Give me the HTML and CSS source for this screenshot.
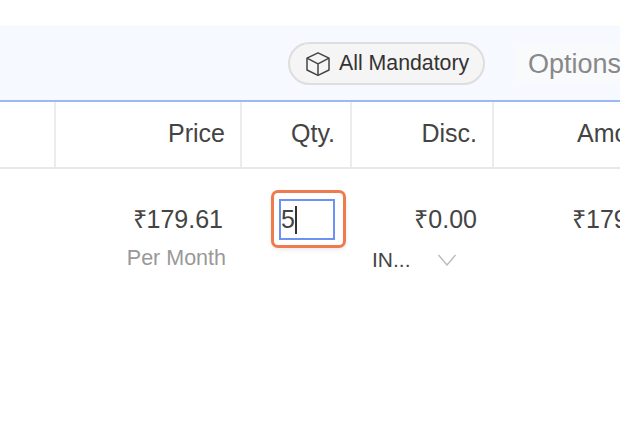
FILE: index.html
```html
<!DOCTYPE html>
<html lang="en">
<head>
<meta charset="utf-8">
<title>Order items</title>
<link rel="stylesheet" href="styles.css">
</head>
<body>
<div class="page">
  <div class="toolbar">
    <div class="chip">
      <svg class="chip-icon" viewBox="0 0 26 26" width="26" height="26" fill="none" stroke="#444" stroke-width="1.5" stroke-linejoin="round">
        <path d="M13 1.8 24 7.2V19L13 24.4 2 19V7.2Z"/>
        <path d="M2 7.2 13 12.8 24 7.2M13 12.8V24.4"/>
      </svg>
      <span>All Mandatory</span>
    </div>
    <div class="options">Options</div>
  </div>
  <div class="grid header">
    <div class="cell"></div>
    <div class="cell head">Price</div>
    <div class="cell head">Qty.</div>
    <div class="cell head">Disc.</div>
    <div class="cell head amount">Amount</div>
  </div>
  <div class="grid row">
    <div></div>
    <div class="price-col">
      <div class="value price">₹179.61</div>
      <div class="sub">Per Month</div>
    </div>
    <div class="qty-col">
      <div class="qty-focus"><div class="qty-input"><span>5</span><i class="caret"></i></div></div>
    </div>
    <div class="disc-col">
      <div class="value disc">₹0.00</div>
      <div class="select"><span>IN...</span>
        <svg viewBox="0 0 20 12" width="20" height="12" fill="none" stroke="#bbb" stroke-width="1.4"><path d="M1.5 1 10 11 18.5 1"/></svg>
      </div>
    </div>
    <div class="value total">₹179.61</div>
  </div>
</div>
</body>
</html>
```
FILE: styles.css
```css
* { box-sizing: border-box; }
html, body { margin: 0; padding: 0; background: #fff; }
body { font-family: "Liberation Sans", Arial, sans-serif; color: #444; }
.page { width: 620px; height: 436px; overflow: hidden; padding-top: 26px; }

.toolbar {
  height: 76px;
  background: #f6f9ff;
  border-top: 1px solid #f5f6f8;
  border-bottom: 2px solid #9db8f6;
  display: flex;
  align-items: center;
  padding-left: 288px;
  white-space: nowrap;
}
.chip {
  width: 197px;
  height: 43px;
  flex: none;
  display: flex;
  align-items: center;
  gap: 8px;
  padding-left: 15px;
  background: #f5f5f5;
  border: 2px solid #dedede;
  border-radius: 22px;
  font-size: 21.3px;
  color: #333;
}
.chip-icon { flex: none; }
.options {
  flex: none;
  margin-left: 31px;
  padding: 5px 12px 3px;
  background: #f9fafc;
  border-radius: 4px;
  font-size: 27px;
  color: #888;
}

.grid { display: grid; grid-template-columns: 56px 186px 110px 142px 300px; width: 794px; }
.header { height: 67px; border-bottom: 2px solid #e8e8e8; }
.cell { border-right: 2px solid #ececec; }
.head {
  font-size: 25px;
  color: #444;
  text-align: right;
  padding: 17px 15px 0 0;
  white-space: nowrap;
}
.head.amount { text-align: left; padding-left: 83px; border-right: 0; }

.row { padding-top: 36px; }
.value { font-size: 25px; line-height: 28px; color: #444; white-space: nowrap; }
.price-col { text-align: right; padding-right: 19px; }
.sub { margin-top: 13px; margin-right: -3px; font-size: 21.5px; line-height: 24px; color: #999; }

.qty-col { margin-top: -15px; padding-left: 29px; }
.qty-focus {
  width: 75px;
  height: 58px;
  padding: 6px;
  border: 3px solid #ee7a4d;
  border-radius: 7px;
  background: #fff;
  box-shadow: 0 2px 4px rgba(0,0,0,.08);
}
.qty-input {
  width: 56px;
  height: 41px;
  border: 2px solid #6a93f3;
  display: flex;
  align-items: center;
  font-size: 25px;
  color: #444;
  margin-left: -1px;
}
.caret { display: block; width: 2px; height: 28px; background: #333; }

.disc-col { text-align: right; padding-right: 17px; }
.select {
  display: flex;
  align-items: center;
  justify-content: flex-start;
  margin-top: 15px;
  padding-left: 20px;
  gap: 26px;
  font-size: 21px;
  line-height: 24px;
  color: #444;
}
.total { padding-left: 78px; }
```
